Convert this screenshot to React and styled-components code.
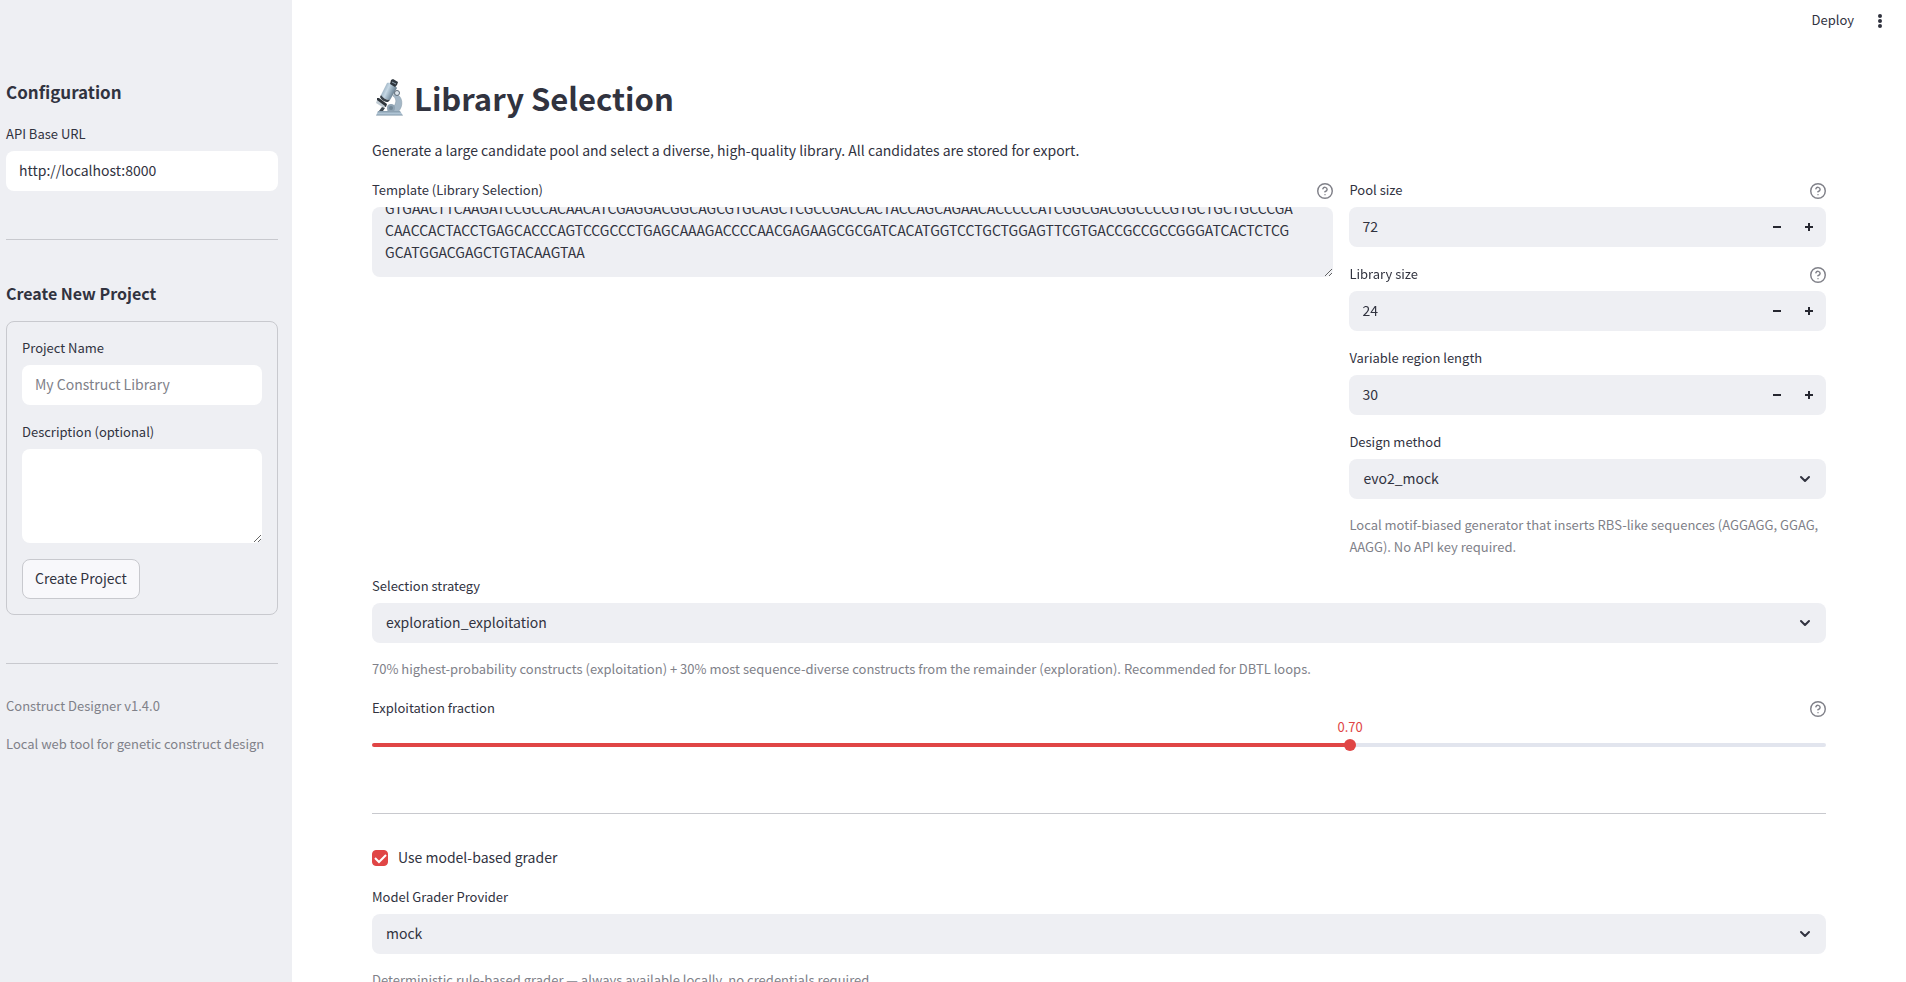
import React, { useEffect, useRef, useState } from 'react';
import styled, { createGlobalStyle, ThemeProvider } from 'styled-components';
import { CircleQuestionMark } from 'lucide-react';

const theme = {
  colors: {
    text: '#31333f',
    muted: '#808189',
    line: '#c8c9ce',
    panel: '#eeeff3',
    track: '#e2e5ee',
    primary: '#e04545',
  },
};

const TEMPLATE = [
  'GTGAACTTCAAGATCCGCCACAACATCGAGGACGGCAGCGTGCAGCTCGCCGACCACTACCAGCAGAACACCCCCATCGGCGACGGCCCCGTGCTGCTGCCCGA',
  'CAACCACTACCTGAGCACCCAGTCCGCCCTGAGCAAAGACCCCAACGAGAAGCGCGATCACATGGTCCTGCTGGAGTTCGTGACCGCCGCCGGGATCACTCTCG',
  'GCATGGACGAGCTGTACAAGTAA',
].join('\n');

const GlobalStyle = createGlobalStyle`
  * {
    box-sizing: border-box;
  }

  body {
    margin: 0;
    background: #fff;
  }

  body, button, input, select, textarea {
    color: ${props => props.theme.colors.text};
    font-family: 'Noto Sans CJK SC', 'Noto Sans', sans-serif;
    font-size: 14px;
  }
`;

const Shell = styled.div`
  display: flex;
  height: 100vh;
  overflow: hidden;
`;

const Sidebar = styled.aside`
  display: flex;
  flex: none;
  flex-direction: column;
  gap: 16px;
  width: 292px;
  padding: 74px 14px 0 6px;
  background: ${props => props.theme.colors.panel};
`;

const Main = styled.main`
  flex: 1;
  min-width: 0;
  overflow-y: auto;
  scrollbar-width: none;
`;

const Header = styled.header`
  display: flex;
  align-items: center;
  justify-content: flex-end;
  gap: 16px;
  height: 40px;
  padding: 0 16px;
`;

const HeaderButton = styled.button`
  display: flex;
  border: 0;
  padding: 0;
  background: none;
  font-size: 13px;
  line-height: 20px;
`;

const Content = styled.div`
  display: flex;
  flex-direction: column;
  gap: 16px;
  padding: 36px 80px 80px;
`;

const Title = styled.h1`
  display: flex;
  align-items: center;
  gap: 8px;
  margin: 0;
  padding-bottom: 2px;
  font-size: 31px;
  line-height: 43px;
`;

const Heading = styled.h2`
  margin: 0;
  padding: 6px 0 3px;
  font-size: 17px;
  line-height: 24px;
`;

const SubHeading = styled.h3`
  margin: 0;
  padding-top: 9px;
  font-size: 16px;
  line-height: 24px;
`;

const Paragraph = styled.p`
  margin: 0;
  line-height: 26px;
`;

const Caption = styled.p`
  margin: -1px 0 1px;
  color: ${props => props.theme.colors.muted};
  font-size: 13px;
  line-height: 22px;
`;

const Divider = styled.hr`
  width: 100%;
  margin: 32px 0 16px;
  border: 0;
  border-top: 1px solid ${props => props.theme.colors.line};
`;

const Form = styled.form`
  display: flex;
  flex-direction: column;
  align-items: flex-start;
  gap: 16px;
  border: 1px solid ${props => props.theme.colors.line};
  border-radius: 8px;
  padding: 15px;
`;

const SubmitButton = styled.button`
  height: 40px;
  border: 1px solid ${props => props.theme.colors.line};
  border-radius: 8px;
  padding: 0 12px 2px;
  background: #f8f8fb;
`;

const FieldBox = styled.div`
  width: 100%;
`;

const LabelRow = styled.div`
  display: flex;
  align-items: center;
  justify-content: space-between;
  height: 24px;
  margin-bottom: 4px;
  font-size: 13px;
  line-height: 20px;

  label {
    padding-bottom: 2px;
  }

  svg {
    color: ${props => props.theme.colors.muted};
  }
`;

const TextInput = styled.input`
  display: block;
  width: 100%;
  height: 40px;
  border: 0;
  border-radius: 8px;
  padding: 0 13px 2px;
  background: #fff;

  &::placeholder {
    color: ${props => props.theme.colors.muted};
  }
`;

const TextArea = styled.textarea`
  display: block;
  width: 100%;
  height: ${props => props.$height}px;
  border: 0;
  border-radius: 8px;
  padding: 12px 13px 14px;
  background: ${props => (props.$filled ? props.theme.colors.panel : '#fff')};
  line-height: 22px;
  resize: vertical;
  scrollbar-width: none;
`;

const Columns = styled.div`
  display: flex;
  gap: 16px;
`;

const Column = styled.div`
  display: flex;
  flex: 1 1 calc(${props => props.$share}% - 16px);
  flex-direction: column;
  gap: 16px;
  min-width: 0;
`;

const Stepper = styled.div`
  display: flex;
  height: 40px;
  overflow: hidden;
  border-radius: 8px;
  padding-right: 1px;
  background: ${props => props.theme.colors.panel};

  input {
    flex: 1;
    min-width: 0;
    border: 0;
    padding: 0 13px 2px;
    background: none;
    appearance: textfield;
  }

  input::-webkit-inner-spin-button {
    display: none;
  }

  button {
    display: flex;
    align-items: center;
    justify-content: center;
    width: 32px;
    border: 0;
    padding: 0;
    background: none;
  }
`;

const SelectBox = styled.div`
  position: relative;

  select {
    display: block;
    width: 100%;
    height: 40px;
    border: 0;
    border-radius: 8px;
    padding: 0 40px 2px 14px;
    background: ${props => props.theme.colors.panel};
    appearance: none;
  }

  svg {
    position: absolute;
    top: 14px;
    right: 15px;
    pointer-events: none;
  }
`;

const SliderBox = styled.div`
  position: relative;
  height: 40px;
`;

const SliderValue = styled.output`
  position: absolute;
  top: -9px;
  color: ${props => props.theme.colors.primary};
  font-size: 13px;
  line-height: 22px;
  transform: translateX(-50%);
`;

const Range = styled.input`
  display: block;
  width: 100%;
  height: 40px;
  margin: 0;
  background: none;
  appearance: none;

  &::-webkit-slider-runnable-track {
    height: 4px;
    border-radius: 4px;
    background: linear-gradient(
      to right,
      ${props => props.theme.colors.primary} var(--fill),
      ${props => props.theme.colors.track} var(--fill)
    );
  }

  &::-webkit-slider-thumb {
    width: 12px;
    height: 12px;
    margin-top: -4px;
    border-radius: 50%;
    background: ${props => props.theme.colors.primary};
    appearance: none;
  }
`;

const CheckRow = styled.div`
  display: flex;
  align-items: center;
  gap: 10px;
  height: 24px;

  label {
    padding-bottom: 2px;
  }
`;

const CheckMark = styled.span`
  display: grid;
  width: 16px;
  height: 16px;

  input, svg {
    grid-area: 1 / 1;
    width: 16px;
    height: 16px;
    margin: 0;
  }

  svg {
    pointer-events: none;
  }

  input {
    border: 1px solid ${props => props.theme.colors.line};
    border-radius: 4px;
    appearance: none;
  }

  input:checked {
    border-color: ${props => props.theme.colors.primary};
    background: ${props => props.theme.colors.primary};
  }
`;

const Microscope = () => (
  <svg width="34" height="38" viewBox="0 0 34 38" aria-hidden="true">
    <defs>
      <linearGradient id="tube" x1="0" y1="0.2" x2="1" y2="0.7">
        <stop offset="0" stopColor="#7d95a8" />
        <stop offset="0.4" stopColor="#c6d8e5" />
        <stop offset="0.7" stopColor="#8299aa" />
        <stop offset="1" stopColor="#4c5a66" />
      </linearGradient>
      <linearGradient id="base" x1="0" y1="0" x2="0" y2="1">
        <stop offset="0" stopColor="#8399aa" />
        <stop offset="0.6" stopColor="#b4c8d8" />
        <stop offset="1" stopColor="#7890a2" />
      </linearGradient>
    </defs>
    <path d="M23 14c8 3 9 13 3 19H15c1-3 4-3 7-6 3-4 2-8-1-10z" fill="#a4b7c6" stroke="#8396a5" strokeWidth="0.5" />
    <path d="M6 32h22l3 4.500H4z" fill="url(#base)" />
    <circle cx="19" cy="29" r="4" fill="#8fa3b3" />
    <circle cx="19" cy="29" r="2" fill="#738898" />
    <path d="M5 19l2 0 8 6-1 3-3-1-6-5z" fill="#2f353b" />
    <path d="M5 21l8 6-1 2-8-5z" fill="#c1ccd4" />
    <path d="M10 28l3 1-2 3H7z" fill="#3f4951" />
    <path d="M15 4c3-1 8 2 10 5l-7 12c-3 0-8-2-9-5z" fill="url(#tube)" />
    <path d="M9 16c2 3 5 5 9 5l-2 2c-3 0-7-2-8-5z" fill="#39424a" />
    <path d="M19 1l2-1 5 3-1 3-2 2-5-3z" fill="#2f363d" />
    <path d="M20 3l4 2" stroke="#8fa0ad" />
    <circle cx="25" cy="14" r="2.500" fill="#dce5ec" stroke="#5d6b77" strokeWidth="1" />
  </svg>
);

const Chevron = () => (
  <svg width="12" height="12" viewBox="0 0 12 12" aria-hidden="true">
    <path d="M2 4l4 4 4-4" fill="none" stroke="#31333f" strokeWidth="2" strokeLinecap="round" strokeLinejoin="round" />
  </svg>
);

const StepIcon = ({ plus }) => (
  <svg width="8" height="8" viewBox="0 0 8 8" aria-hidden="true">
    <path d={plus ? 'M0 4h8M4 0v8' : 'M0 4h8'} fill="none" stroke="#262730" strokeWidth="2" />
  </svg>
);

const Field = ({ id, label, help, children }) => (
  <FieldBox>
    <LabelRow>
      <label htmlFor={id}>{label}</label>
      {help && <CircleQuestionMark size={16} viewBox="1 1 22 22" />}
    </LabelRow>
    {children}
  </FieldBox>
);

const NumberField = ({ id, label, help, initial }) => {
  const [value, setValue] = useState(initial);

  return (
    <Field id={id} label={label} help={help}>
      <Stepper>
        <input id={id} type="number" value={value} onChange={e => setValue(Number(e.target.value))} />
        <button type="button" aria-label={`Decrease ${label}`} onClick={() => setValue(value - 1)}>
          <StepIcon />
        </button>
        <button type="button" aria-label={`Increase ${label}`} onClick={() => setValue(value + 1)}>
          <StepIcon plus />
        </button>
      </Stepper>
    </Field>
  );
};

const SelectField = ({ id, label, option }) => (
  <Field id={id} label={label}>
    <SelectBox>
      <select id={id} defaultValue={option}>
        <option>{option}</option>
      </select>
      <Chevron />
    </SelectBox>
  </Field>
);

const TemplateField = () => {
  const ref = useRef(null);

  // keep the end of the sequence in view
  useEffect(() => {
    ref.current.scrollTop = ref.current.scrollHeight;
  }, []);

  return (
    <Field id="template" label="Template (Library Selection)" help>
      <TextArea id="template" ref={ref} $height={70} $filled spellCheck={false} defaultValue={TEMPLATE} />
    </Field>
  );
};

const SliderField = ({ id, label, min, max, initial }) => {
  const [value, setValue] = useState(initial);
  const ratio = (value - min) / (max - min);
  const position = `calc(6px + (100% - 12px) * ${ratio})`;

  return (
    <Field id={id} label={label} help>
      <SliderBox>
        <SliderValue htmlFor={id} style={{ left: position }}>{value.toFixed(2)}</SliderValue>
        <Range
          id={id}
          type="range"
          min={min}
          max={max}
          step={0.01}
          value={value}
          style={{ '--fill': position }}
          onChange={e => setValue(Number(e.target.value))}
        />
      </SliderBox>
    </Field>
  );
};

const ProjectSidebar = () => (
  <Sidebar>
    <Heading>Configuration</Heading>
    <Field id="api-url" label="API Base URL">
      <TextInput id="api-url" type="text" defaultValue="http://localhost:8000" />
    </Field>
    <Divider />
    <SubHeading>Create New Project</SubHeading>
    <Form onSubmit={e => e.preventDefault()}>
      <Field id="project-name" label="Project Name">
        <TextInput id="project-name" type="text" placeholder="My Construct Library" />
      </Field>
      <Field id="description" label="Description (optional)">
        <TextArea id="description" $height={94} />
      </Field>
      <SubmitButton type="submit">Create Project</SubmitButton>
    </Form>
    <Divider />
    <Caption>Construct Designer v1.4.0</Caption>
    <Caption>Local web tool for genetic construct design</Caption>
  </Sidebar>
);

const App = () => (
  <ThemeProvider theme={theme}>
    <GlobalStyle />
    <Shell>
      <ProjectSidebar />
      <Main>
        <Header>
          <HeaderButton>Deploy</HeaderButton>
          <HeaderButton aria-label="Menu">
            <svg width="20" height="20" viewBox="0 0 20 20" fill="#31333f">
              <circle cx="10" cy="6" r="2" />
              <circle cx="10" cy="11" r="2" />
              <circle cx="10" cy="16" r="2" />
            </svg>
          </HeaderButton>
        </Header>
        <Content>
          <Title><Microscope />Library Selection</Title>
          <Paragraph>
            Generate a large candidate pool and select a diverse, high-quality library. All candidates are stored for export.
          </Paragraph>
          <Columns>
            <Column $share={66.67}>
              <TemplateField />
            </Column>
            <Column $share={33.33}>
              <NumberField id="pool-size" label="Pool size" help initial={72} />
              <NumberField id="library-size" label="Library size" help initial={24} />
              <NumberField id="region-length" label="Variable region length" initial={30} />
              <SelectField id="method" label="Design method" option="evo2_mock" />
              <Caption>
                Local motif-biased generator that inserts RBS-like sequences (AGGAGG, GGAG, AAGG). No API key required.
              </Caption>
            </Column>
          </Columns>
          <SelectField id="strategy" label="Selection strategy" option="exploration_exploitation" />
          <Caption>
            70% highest-probability constructs (exploitation) + 30% most sequence-diverse constructs from the remainder
            (exploration). Recommended for DBTL loops.
          </Caption>
          <SliderField id="fraction" label="Exploitation fraction" min={0.1} max={0.99} initial={0.7} />
          <Divider />
          <CheckRow>
            <CheckMark>
              <input id="use-grader" type="checkbox" defaultChecked />
              <svg viewBox="0 0 16 16" aria-hidden="true">
                <path d="M3 8l4 4 7-7" fill="none" stroke="#fff" strokeWidth="2" />
              </svg>
            </CheckMark>
            <label htmlFor="use-grader">Use model-based grader</label>
          </CheckRow>
          <SelectField id="provider" label="Model Grader Provider" option="mock" />
          <Caption>Deterministic rule-based grader — always available locally, no credentials required.</Caption>
        </Content>
      </Main>
    </Shell>
  </ThemeProvider>
);

export default App;
